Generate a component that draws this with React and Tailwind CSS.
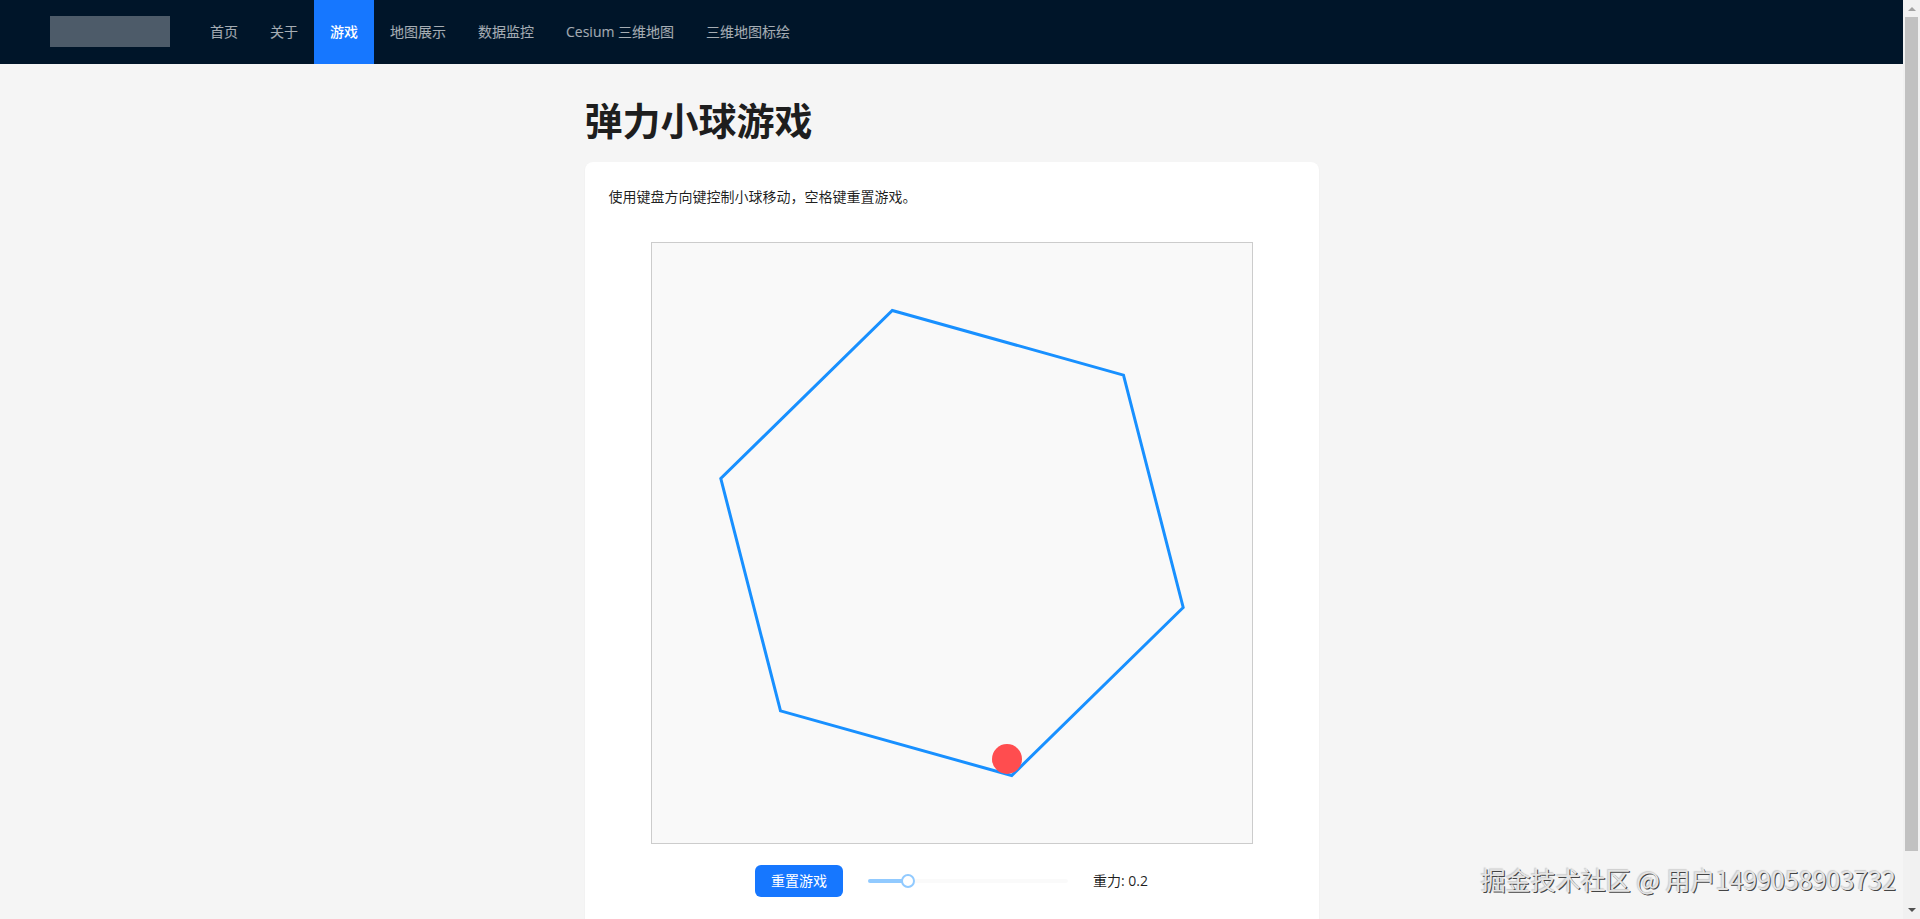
import React, { useEffect, useState } from 'react';

const NAV_ITEMS = [
  { key: 'home', label: '首页' },
  { key: 'about', label: '关于' },
  { key: 'game', label: '游戏' },
  { key: 'map', label: '地图展示' },
  { key: 'monitor', label: '数据监控' },
  { key: 'cesium', label: 'Cesium 三维地图' },
  { key: 'plot', label: '三维地图标绘' },
];

const SIZE = 600;
const HEX_RADIUS = 240;
const HEX_ANGLE = 15.6;
const BALL_RADIUS = 15;
const START = { x: 355, y: 516 };

const hexPoints = () =>
  Array.from({ length: 6 }, (_, i) => {
    const a = ((HEX_ANGLE + i * 60) * Math.PI) / 180;
    const x = SIZE / 2 + HEX_RADIUS * Math.cos(a);
    const y = SIZE / 2 + HEX_RADIUS * Math.sin(a);
    return `${x.toFixed(1)},${y.toFixed(1)}`;
  }).join(' ');

const Header = ({ active, onSelect }) => (
  <header className="flex h-16 shrink-0 items-start bg-[#001529] px-[50px]">
    <div className="mt-4 mr-6 h-[31px] w-[120px] bg-white/30" />
    <nav className="flex h-full">
      {NAV_ITEMS.map((item) => (
        <a
          key={item.key}
          href={`#${item.key}`}
          onClick={() => onSelect(item.key)}
          className={`flex h-full items-center px-4 whitespace-nowrap ${
            item.key === active
              ? 'bg-[#1677ff] font-medium text-white'
              : 'text-white/65 hover:text-white'
          }`}
        >
          {item.label}
        </a>
      ))}
    </nav>
  </header>
);

const Board = ({ ball }) => (
  <svg
    viewBox={`0 0 ${SIZE} ${SIZE}`}
    className="box-content block size-[600px] border border-[#ccc] bg-[#f9f9f9]"
  >
    <polygon points={hexPoints()} fill="none" stroke="#1890ff" strokeWidth="3" />
    <circle cx={ball.x} cy={ball.y} r={BALL_RADIUS} fill="#ff4d4f" />
  </svg>
);

const GravitySlider = ({ value, onChange }) => (
  <div className="relative flex h-3 w-[200px] items-center">
    <div className="h-1 w-full rounded-sm bg-black/2">
      <div className="h-full rounded-sm bg-[#91caff]" style={{ width: `${value * 100}%` }} />
    </div>
    <input
      id="gravity"
      type="range"
      min="0"
      max="1"
      step="0.1"
      value={value}
      onChange={(e) => onChange(Number(e.target.value))}
      className="absolute -left-[7px] h-[14px] w-[214px] cursor-pointer appearance-none bg-transparent [&::-webkit-slider-thumb]:size-[14px] [&::-webkit-slider-thumb]:appearance-none [&::-webkit-slider-thumb]:rounded-full [&::-webkit-slider-thumb]:border-2 [&::-webkit-slider-thumb]:border-[#91caff] [&::-webkit-slider-thumb]:bg-white"
    />
  </div>
);

const ScrollBar = () => (
  <div className="flex w-[17px] shrink-0 flex-col items-center bg-[#f1f1f1]">
    <svg className="h-[17px] w-[17px] shrink-0" viewBox="0 0 17 17">
      <path d="M5 11h8L9 7z" fill="#a3a3a3" />
    </svg>
    <div className="h-[834px] w-[13px] bg-[#c1c1c1]" />
    <svg className="mt-auto h-[17px] w-[17px] shrink-0" viewBox="0 0 17 17">
      <path d="M5 6h8L9 10z" fill="#505050" />
    </svg>
  </div>
);

const App = () => {
  const [active, setActive] = useState('game');
  const [gravity, setGravity] = useState(0.2);
  const [ball, setBall] = useState(START);

  useEffect(() => {
    const moves = {
      ArrowLeft: [-5, 0],
      ArrowRight: [5, 0],
      ArrowUp: [0, -5],
      ArrowDown: [0, 5],
    };

    const handleKey = (e) => {
      if (e.target.tagName === 'INPUT') return;
      if (e.code === 'Space') {
        setBall(START);
      } else if (moves[e.key]) {
        const [dx, dy] = moves[e.key];
        setBall((b) => ({ x: b.x + dx, y: b.y + dy }));
      }
    };

    window.addEventListener('keydown', handleKey);
    return () => window.removeEventListener('keydown', handleKey);
  }, []);

  return (
    <div className="relative flex h-screen overflow-hidden bg-[#f5f5f5] font-['Open_Sans','Noto_Sans_CJK_SC',sans-serif] text-sm leading-[22px] text-black/88">
      <div className="flex min-w-0 flex-1 flex-col">
        <Header active={active} onSelect={setActive} />

        <main className="mx-auto w-full max-w-[734px] pt-8">
          <h1 className="mb-[18px] text-[38px] leading-[48px] font-bold">弹力小球游戏</h1>

          <div className="rounded-lg bg-white px-6 pt-6 pb-10 shadow-xs">
            <p>使用键盘方向键控制小球移动，空格键重置游戏。</p>

            <div className="mt-[34px] flex justify-center">
              <Board ball={ball} />
            </div>

            <div className="mt-[21px] flex items-center justify-center gap-[25px]">
              <button
                type="button"
                onClick={() => setBall(START)}
                className="h-8 rounded-md bg-[#1677ff] px-4 text-white hover:bg-[#4096ff]"
              >
                重置游戏
              </button>
              <GravitySlider value={gravity} onChange={setGravity} />
              <label htmlFor="gravity">重力: {gravity}</label>
            </div>
          </div>
        </main>
      </div>

      <ScrollBar />

      <div className="pointer-events-none absolute right-6 bottom-[22px] font-['Noto_Sans_CJK_SC',sans-serif] text-[25px] leading-9 text-[#e4e4e4] [text-shadow:1px_1px_0_#444,-1px_-1px_1px_#ccc]">
        掘金技术社区 @ 用户1499058903732
      </div>
    </div>
  );
};

export default App;
